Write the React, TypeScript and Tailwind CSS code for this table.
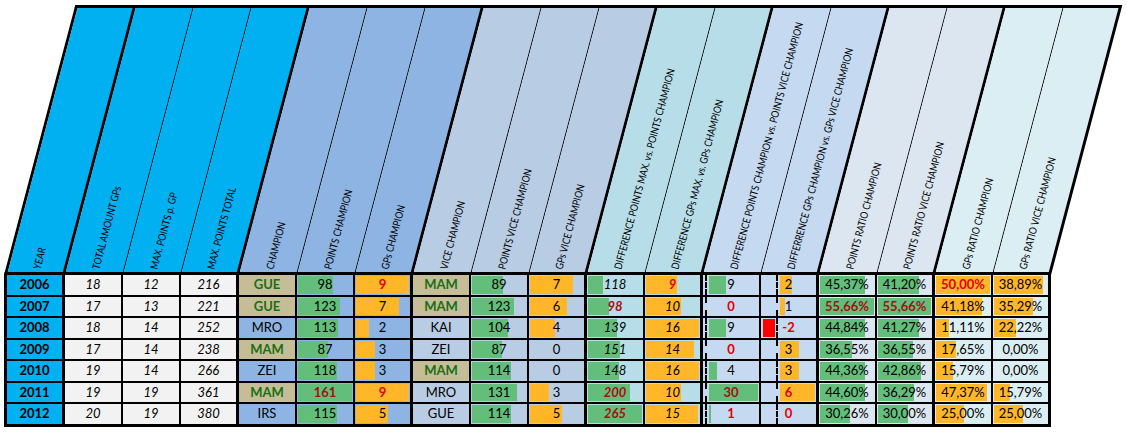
import React from 'react';

type Col = { h: string; hb: string; bb: string; thick: boolean };

const cols: Col[] = [
  { h: 'YEAR', hb: 'bg-[#00b0f0]', bb: 'bg-[#00b0f0]', thick: true },
  { h: 'TOTAL AMOUNT GPs', hb: 'bg-[#00b0f0]', bb: 'bg-[#f2f2f2]', thick: false },
  { h: 'MAX. POINTS p. GP', hb: 'bg-[#00b0f0]', bb: 'bg-[#f2f2f2]', thick: false },
  { h: 'MAX. POINTS TOTAL', hb: 'bg-[#00b0f0]', bb: 'bg-[#f2f2f2]', thick: true },
  { h: 'CHAMPION', hb: 'bg-[#8db4e2]', bb: 'bg-[#8db4e2]', thick: false },
  { h: 'POINTS CHAMPION', hb: 'bg-[#8db4e2]', bb: 'bg-[#8db4e2]', thick: false },
  { h: 'GPs CHAMPION', hb: 'bg-[#8db4e2]', bb: 'bg-[#8db4e2]', thick: true },
  { h: 'VICE CHAMPION', hb: 'bg-[#b8cce4]', bb: 'bg-[#b8cce4]', thick: false },
  { h: 'POINTS VICE CHAMPION', hb: 'bg-[#b8cce4]', bb: 'bg-[#b8cce4]', thick: false },
  { h: 'GPs VICE CHAMPION', hb: 'bg-[#b8cce4]', bb: 'bg-[#b8cce4]', thick: true },
  { h: 'DIFFERENCE POINTS MAX. vs. POINTS CHAMPION', hb: 'bg-[#b7dee8]', bb: 'bg-[#b7dee8]', thick: false },
  { h: 'DIFFERENCE GPs MAX. vs. GPs CHAMPION', hb: 'bg-[#b7dee8]', bb: 'bg-[#b7dee8]', thick: true },
  { h: 'DIFFERENCE POINTS CHAMPION vs. POINTS VICE CHAMPION', hb: 'bg-[#c5d9f1]', bb: 'bg-[#c5d9f1]', thick: false },
  { h: 'DIFFERRENCE GPs CHAMPION vs. GPs VICE CHAMPION', hb: 'bg-[#c5d9f1]', bb: 'bg-[#c5d9f1]', thick: true },
  { h: 'POINTS RATIO CHAMPION', hb: 'bg-[#dce6f1]', bb: 'bg-[#dce6f1]', thick: false },
  { h: 'POINTS RATIO VICE CHAMPION', hb: 'bg-[#dce6f1]', bb: 'bg-[#dce6f1]', thick: true },
  { h: 'GPs RATIO CHAMPION', hb: 'bg-[#daeef3]', bb: 'bg-[#daeef3]', thick: false },
  { h: 'GPs RATIO VICE CHAMPION', hb: 'bg-[#daeef3]', bb: 'bg-[#daeef3]', thick: true },
];

// text, style: b bold, i italic, g champion highlight, r red, d dark red, ri / di italic variants
type Cell = [string, string?];

const rows: Cell[][] = [
  [['2006', 'b'], ['18', 'i'], ['12', 'i'], ['216', 'i'], ['GUE', 'g'], ['98'], ['9', 'r'], ['MAM', 'g'], ['89'], ['7'], ['118', 'i'], ['9', 'ri'], ['9'], ['2'], ['45,37%'], ['41,20%'], ['50,00%', 'r'], ['38,89%']],
  [['2007', 'b'], ['17', 'i'], ['13', 'i'], ['221', 'i'], ['GUE', 'g'], ['123'], ['7'], ['MAM', 'g'], ['123'], ['6'], ['98', 'di'], ['10', 'i'], ['0', 'r'], ['1'], ['55,66%', 'd'], ['55,66%', 'd'], ['41,18%'], ['35,29%']],
  [['2008', 'b'], ['18', 'i'], ['14', 'i'], ['252', 'i'], ['MRO'], ['113'], ['2'], ['KAI'], ['104'], ['4'], ['139', 'i'], ['16', 'i'], ['9'], ['-2', 'r'], ['44,84%'], ['41,27%'], ['11,11%'], ['22,22%']],
  [['2009', 'b'], ['17', 'i'], ['14', 'i'], ['238', 'i'], ['MAM', 'g'], ['87'], ['3'], ['ZEI'], ['87'], ['0'], ['151', 'i'], ['14', 'i'], ['0', 'r'], ['3'], ['36,55%'], ['36,55%'], ['17,65%'], ['0,00%']],
  [['2010', 'b'], ['19', 'i'], ['14', 'i'], ['266', 'i'], ['ZEI'], ['118'], ['3'], ['MAM', 'g'], ['114'], ['0'], ['148', 'i'], ['16', 'i'], ['4'], ['3'], ['44,36%'], ['42,86%'], ['15,79%'], ['0,00%']],
  [['2011', 'b'], ['19', 'i'], ['19', 'i'], ['361', 'i'], ['MAM', 'g'], ['161', 'd'], ['9', 'r'], ['MRO'], ['131'], ['3'], ['200', 'di'], ['10', 'i'], ['30', 'd'], ['6', 'r'], ['44,60%'], ['36,29%'], ['47,37%'], ['15,79%']],
  [['2012', 'b'], ['20', 'i'], ['19', 'i'], ['380', 'i'], ['IRS'], ['115'], ['5'], ['GUE'], ['114'], ['5'], ['265', 'di'], ['15', 'i'], ['1', 'r'], ['0', 'r'], ['30,26%'], ['30,00%'], ['25,00%'], ['25,00%']],
];

const F = 999;
const GREEN = 'bg-[#63be7b]';
const ORANGE = 'bg-[#ffb628]';

// data bars per column; axis = width of the negative zone left of the dashed axis
const bars: Record<number, { color: string; axis?: number; w: number[] }> = {
  5: { color: GREEN, w: [35, 42, 40, 30, 39, F, 39] },
  6: { color: ORANGE, w: [F, 43, 13, 19, 19, F, 32] },
  8: { color: GREEN, w: [31, 42, 36, 30, 39, 45, 39] },
  9: { color: ORANGE, w: [43, 37, 25, 0, 0, 19, 32] },
  10: { color: GREEN, w: [15, 21, 29, 32, 31, 42, F] },
  11: { color: ORANGE, w: [31, 35, F, 48, F, 35, 52] },
  12: { color: GREEN, axis: 2, w: [17, 0, 17, 0, 8, F, 2] },
  13: { color: ORANGE, axis: 15, w: [12, 5, -12, 19, 19, F, 0] },
  14: { color: GREEN, w: [45, F, 45, 32, 45, 45, 30] },
  15: { color: GREEN, w: [41, F, 41, 35, 43, 36, 30] },
  16: { color: ORANGE, w: [F, 46, 13, 20, 17, 51, 28] },
  17: { color: ORANGE, w: [49, 39, 22, 0, 0, 16, 29] },
};

const textStyle: Record<string, string> = {
  b: 'font-bold text-black',
  i: 'italic text-black',
  g: 'font-bold text-[#1b6e14]',
  r: 'font-bold text-[#e00000]',
  d: 'font-bold text-[#a50f0f]',
  ri: 'font-bold italic text-[#e00000]',
  di: 'font-bold italic text-[#a50f0f]',
};

function Bar({ col, row }: { col: number; row: number }) {
  const b = bars[col];
  if (!b) return null;
  const w = b.w[row];
  const pos =
    w === F ? <div className={`flex-1 mr-px ${b.color}`} /> : w > 0 ? <div className={b.color} style={{ width: w }} /> : null;
  if (b.axis === undefined) {
    return <div className="flex h-full py-px pl-px">{pos}</div>;
  }
  return (
    <div className="flex h-full py-px">
      <div className="flex shrink-0 justify-end pr-px" style={{ width: b.axis }}>
        {w < 0 && <div className="bg-[#ff0000]" style={{ width: -w }} />}
      </div>
      <div className="w-0 -my-px border-l-2 border-dashed border-black" />
      <div className="w-[2px] shrink-0" />
      {pos}
    </div>
  );
}

function Row({ cells, index, last }: { cells: Cell[]; index: number; last: boolean }) {
  return (
    <div className={`flex border-l-[3px] border-black ${last ? 'h-[22.5px]' : 'h-[21.5px]'}`}>
      {cells.map(([t, s], ci) => {
        const c = cols[ci];
        return (
          <div
            key={ci}
            className={`relative w-[58px] shrink-0 border-black ${last ? 'border-b-[3px]' : 'border-b-2'} ${
              c.thick ? 'border-r-[3px]' : 'border-r-2'
            } ${s === 'g' ? 'bg-[#c4bd97]' : c.bb}`}
          >
            <Bar col={ci} row={index} />
            <div
              className={`absolute inset-0 flex items-center justify-center text-[13px] leading-none ${
                s ? textStyle[s] : 'text-black'
              }`}
            >
              {t}
            </div>
          </div>
        );
      })}
    </div>
  );
}

export default function App() {
  return (
    <div className="w-[1127px] h-[432px] overflow-hidden bg-white pt-[5px] pl-[4px] [font-family:Lato,'Noto_Sans',sans-serif]">
      {/* slanted header */}
      <div className="flex w-[1047px] h-[270px] border-t-[3px] border-b-[3px] border-l-[3px] border-black origin-bottom [transform:skewX(-14.8deg)]">
        {cols.map((c) => (
          <div
            key={c.h}
            className={`relative w-[58px] shrink-0 h-full border-black ${c.hb} ${c.thick ? 'border-r-[3px]' : 'border-r'}`}
          >
            <div className="absolute left-1/2 bottom-[3px] w-0 h-0">
              <span className="absolute left-0 top-0 origin-top-left whitespace-nowrap text-[10.5px] leading-none text-black [transform:skewX(14.8deg)_rotate(-75deg)_translateY(-50%)_scaleX(0.84)]">
                {c.h}
              </span>
            </div>
          </div>
        ))}
      </div>

      {/* body */}
      <div className="w-[1047px]">
        {rows.map((r, ri) => (
          <Row key={ri} cells={r} index={ri} last={ri === rows.length - 1} />
        ))}
      </div>
    </div>
  );
}
